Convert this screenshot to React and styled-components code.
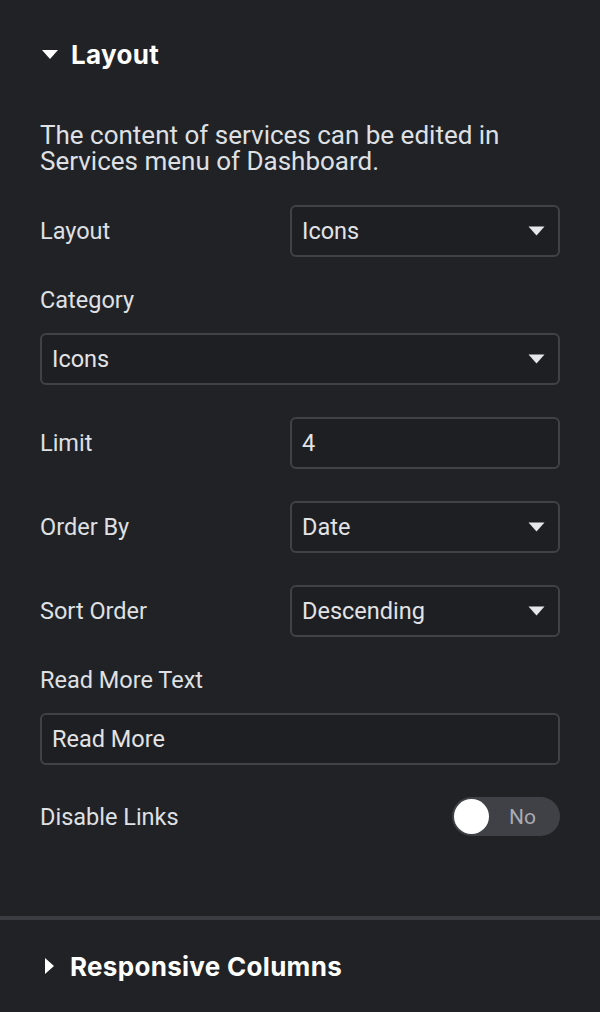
import * as React from "react"
import styled, { createGlobalStyle } from 'styled-components'

const GlobalStyle = createGlobalStyle`
  html, body {
    margin: 0;
    padding: 0;
    background: #212226;
  }
  body {
    font-family: Roboto, "Liberation Sans", sans-serif;
    color: #dfe0e3;
  }
`

const Panel = styled.div`
  width: 600px;
  min-height: 1012px;
  background: #212226;
`

const Section = styled.section`
  padding: 0 40px ${p => p.$open ? '80px' : '0'};
`

const SectionHeader = styled.div`
  height: ${p => p.$height}px;
  display: flex;
  align-items: center;
  gap: 13px;
  font-family: Inter, "Liberation Sans", sans-serif;
  font-weight: 700;
  font-size: 26px;
  color: #ffffff;
  letter-spacing: 0.3px;
`

const Caret = styled.svg`
  flex: none;
  margin-left: ${p => p.$indent || 0}px;
  margin-right: ${p => p.$after || 0}px;
`

const Description = styled.p`
  margin: 14px 0 0;
  font-size: 26px;
  line-height: 26px;
  color: #dfe0e3;
`

const Controls = styled.div`
  display: flex;
  flex-direction: column;
  gap: 32px;
  margin-top: 31px;
`

const InlineRow = styled.div`
  display: flex;
  align-items: center;
  justify-content: space-between;
`

const StackGroup = styled.div`
  display: flex;
  flex-direction: column;
  gap: 22px;
`

const Label = styled.div`
  font-size: 23.5px;
  line-height: 22px;
  color: #dfe0e3;
`

const Field = styled.div`
  box-sizing: border-box;
  width: ${p => p.$full ? '100%' : '270px'};
  height: 52px;
  border: 2px solid #404247;
  border-radius: 6px;
  background: #1e1f23;
  display: flex;
  align-items: center;
  justify-content: space-between;
  padding: 0 13px 0 10px;
  font-size: 23.5px;
  color: #e2e3e6;
`

const Toggle = styled.div`
  box-sizing: border-box;
  width: 108px;
  height: 39px;
  border-radius: 20px;
  background: #3f4147;
  display: flex;
  align-items: center;
  padding: 0 24px 0 2px;
  justify-content: space-between;
`

const Knob = styled.span`
  width: 35px;
  height: 35px;
  border-radius: 50%;
  background: #ffffff;
`

const ToggleText = styled.span`
  font-size: 21px;
  color: #a9abb1;
`

const Divider = styled.div`
  height: 4px;
  background: #3a3c41;
`

const DownArrow = () => (
  <svg width="17" height="10" viewBox="0 0 17 10">
    <path d="M0.5 0.5 H16.5 L8.5 9.5 Z" fill="#e6e7ea" />
  </svg>
)

const Select = ({ value, full }) => (
  <Field $full={full}>
    <span>{value}</span>
    <DownArrow />
  </Field>
)

const App = () => {
  return (
    <Panel>
      <GlobalStyle />
      <Section $open>
        <SectionHeader $height={108}>
          <Caret width="16" height="9" viewBox="0 0 16 9" $indent={2}>
            <path d="M0 0 H16 L8 9 Z" fill="#ffffff" />
          </Caret>
          <span>Layout</span>
        </SectionHeader>
        <Description>
          The content of services can be edited in Services menu of Dashboard.
        </Description>
        <Controls>
          <InlineRow>
            <Label>Layout</Label>
            <Select value="Icons" />
          </InlineRow>
          <StackGroup>
            <Label>Category</Label>
            <Select value="Icons" full />
          </StackGroup>
          <InlineRow>
            <Label>Limit</Label>
            <Field>4</Field>
          </InlineRow>
          <InlineRow>
            <Label>Order By</Label>
            <Select value="Date" />
          </InlineRow>
          <InlineRow>
            <Label>Sort Order</Label>
            <Select value="Descending" />
          </InlineRow>
          <StackGroup>
            <Label>Read More Text</Label>
            <Field $full>Read More</Field>
          </StackGroup>
          <InlineRow>
            <Label>Disable Links</Label>
            <Toggle>
              <Knob />
              <ToggleText>No</ToggleText>
            </Toggle>
          </InlineRow>
        </Controls>
      </Section>
      <Divider />
      <Section>
        <SectionHeader $height={92}>
          <Caret width="9" height="16" viewBox="0 0 9 16" $indent={5} $after={3}>
            <path d="M0 0 L9 8 L0 16 Z" fill="#ffffff" />
          </Caret>
          <span>Responsive Columns</span>
        </SectionHeader>
      </Section>
    </Panel>
  )
}

export default App
